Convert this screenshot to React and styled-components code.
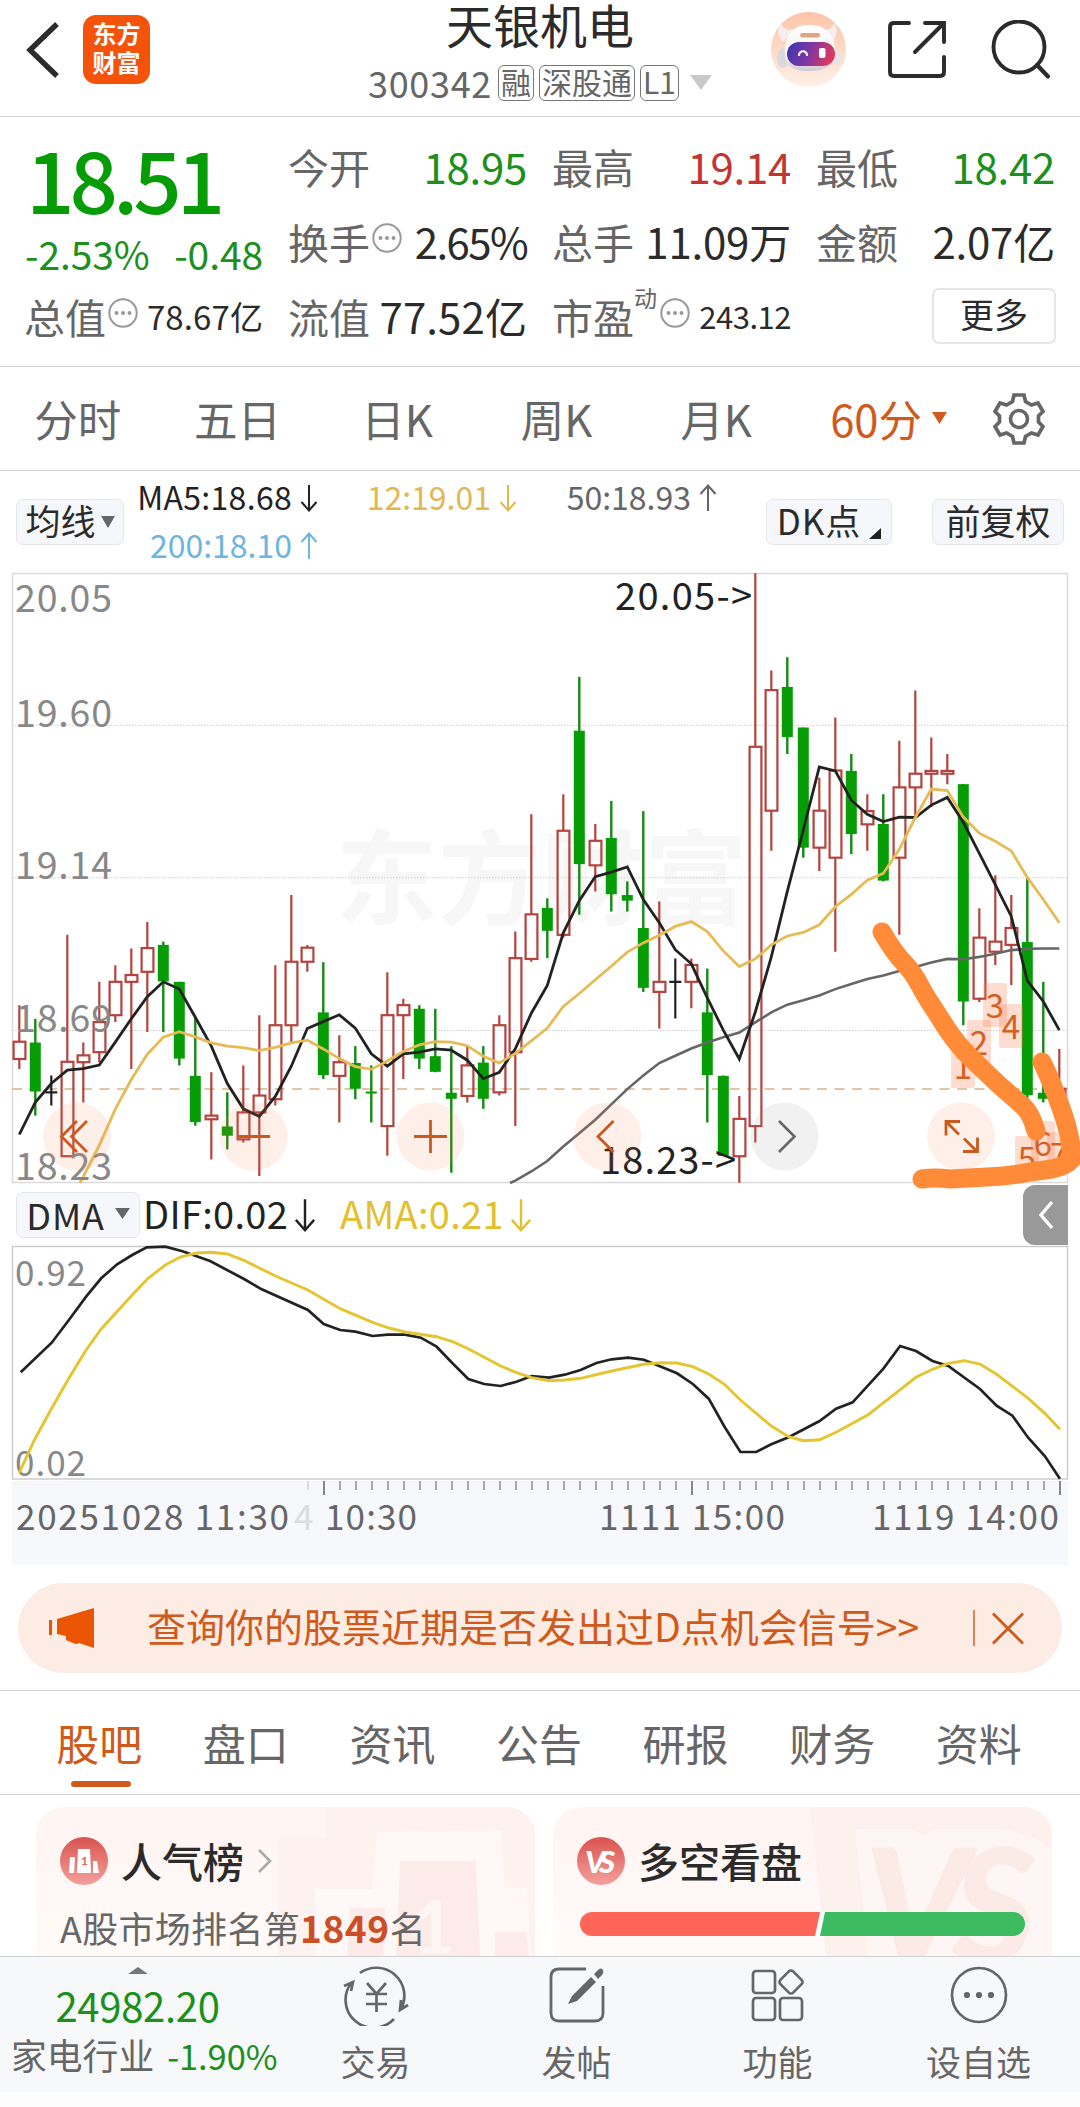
import styled, { createGlobalStyle } from "styled-components";

const green = "#1c8f1c";
const red = "#c23531";
const orange = "#d05a1b";
const gray = "#666";
const dark = "#2b2b2b";

const quotes = [
  { label: "今开", value: "18.95", color: green },
  { label: "最高", value: "19.14", color: red },
  { label: "最低", value: "18.42", color: green },
  { label: "换手", value: "2.65%", info: true, ls: -1.6 },
  { label: "总手", value: "11.09万", ls: -0.2 },
  { label: "金额", value: "2.07亿", ls: -0.2 },
  { label: "总值", value: "78.67亿", info: true, size: 33, ls: 0.1 },
  { label: "流值", value: "77.52亿", ls: 0.1 },
  { label: "市盈", sup: "动", value: "243.12", info: true, size: 31, ls: -0.5 },
];

const periods = ["分时", "五日", "日K", "周K", "月K"];
const tabs = ["股吧", "盘口", "资讯", "公告", "研报", "财务", "资料"];

// [kind, high, body top, body bottom, low] in chart steps
const candles = [
  ["r", 1083, 1174, 1217, 1242],
  ["g", 1117, 1176, 1298, 1358],
  ["k", 1258, 1300, 1300, 1333],
  ["r", 908, 1224, 1459, 1459],
  ["r", 1176, 1208, 1225, 1325],
  ["r", 1025, 1125, 1200, 1225],
  ["r", 984, 1025, 1108, 1125],
  ["r", 942, 1008, 1025, 1242],
  ["r", 876, 941, 1000, 1150],
  ["g", 925, 933, 1024, 1150],
  ["g", 1025, 1025, 1216, 1233],
  ["g", 1115, 1259, 1374, 1383],
  ["r", 1250, 1358, 1367, 1467],
  ["g", 1300, 1385, 1408, 1442],
  ["r", 1233, 1350, 1417, 1425],
  ["r", 1108, 1308, 1350, 1508],
  ["r", 984, 1133, 1317, 1333],
  ["r", 809, 975, 1133, 1175],
  ["r", 933, 940, 975, 1000],
  ["g", 976, 1101, 1257, 1267],
  ["r", 1158, 1225, 1259, 1375],
  ["g", 1185, 1227, 1291, 1317],
  ["g", 1233, 1298, 1303, 1375],
  ["r", 1001, 1108, 1384, 1458],
  ["r", 1067, 1083, 1108, 1267],
  ["g", 1083, 1092, 1216, 1242],
  ["g", 1092, 1210, 1249, 1250],
  ["g", 1185, 1301, 1316, 1500],
  ["r", 1183, 1233, 1309, 1325],
  ["g", 1185, 1226, 1316, 1341],
  ["r", 1108, 1133, 1300, 1308],
  ["r", 900, 966, 1200, 1384],
  ["r", 608, 857, 968, 975],
  ["g", 817, 841, 898, 966],
  ["r", 558, 649, 908, 915],
  ["g", 266, 400, 732, 858],
  ["r", 632, 674, 735, 800],
  ["g", 575, 667, 807, 850],
  ["g", 775, 809, 823, 850],
  ["g", 600, 891, 1040, 1050],
  ["r", 825, 1025, 1050, 1141],
  ["k", 967, 1025, 1025, 1116],
  ["r", 967, 983, 1025, 1091],
  ["g", 992, 1101, 1257, 1375],
  ["g", 1258, 1259, 1458, 1458],
  ["r", 1309, 1366, 1459, 1525],
  ["r", 8, 440, 1384, 1425],
  ["r", 250, 299, 599, 699],
  ["g", 217, 291, 416, 458],
  ["g", 392, 392, 691, 716],
  ["r", 517, 599, 691, 749],
  ["r", 367, 499, 716, 950],
  ["g", 458, 500, 657, 707],
  ["r", 558, 600, 633, 699],
  ["g", 558, 632, 773, 775],
  ["r", 425, 541, 716, 908],
  ["r", 300, 507, 541, 616],
  ["r", 417, 500, 507, 590],
  ["r", 458, 500, 507, 533],
  ["g", 533, 533, 1074, 1133],
  ["r", 842, 915, 1067, 1075],
  ["r", 760, 925, 950, 983],
  ["r", 809, 891, 933, 1033],
  ["g", 767, 926, 1307, 1333],
  ["g", 1025, 1301, 1316, 1325],
  ["r", 1192, 1291, 1325, 1340],
];

const ma5 = [
  1405, 1325, 1278, 1245, 1241, 1232, 1175, 1117, 1062, 1025, 1043, 1113, 1185,
  1278, 1341, 1360, 1310, 1235, 1141, 1124, 1107, 1140, 1204, 1235, 1204, 1200,
  1192, 1195, 1220, 1266, 1250, 1192, 1103, 1034, 903, 823, 763, 752, 739, 820,
  878, 945, 980, 1065, 1145, 1217, 1100, 963, 800, 647, 490, 500, 573, 608, 626,
  615, 616, 585, 566, 628, 705, 783, 862, 1022, 1074, 1145,
];
// starts at the sixth candle
const ma12 = [
  1432, 1342, 1268, 1205, 1163, 1149, 1162, 1177, 1185, 1189, 1196, 1188, 1177,
  1170, 1192, 1216, 1236, 1243, 1222, 1198, 1182, 1174, 1175, 1184, 1210, 1227,
  1203, 1172, 1140, 1086, 1054, 1020, 986, 951, 928, 909, 887, 875, 900, 948,
  987, 968, 933, 911, 902, 883, 838, 807, 772, 755, 695, 616, 545, 549, 615,
  655, 675, 699, 765, 820, 878,
];
const ma50 = [
  1520, 1497, 1471, 1435, 1402, 1368, 1330, 1292, 1258, 1227, 1209, 1191, 1176,
  1163, 1151, 1126, 1101, 1082, 1071, 1059, 1043, 1030, 1018, 1009, 998, 988,
  977, 968, 969, 963, 955, 946, 943, 942, 942,
];

const dif = [
  [30, 577], [75, 488], [100, 420], [125, 350], [147, 295], [170, 253],
  [192, 225], [213, 202], [240, 200], [265, 214], [305, 243], [355, 298],
  [380, 328], [447, 390], [470, 432], [494, 450], [516, 455], [541, 468],
  [563, 464], [588, 464], [611, 473], [634, 500], [657, 550], [680, 597],
  [703, 612], [727, 618], [750, 605], [772, 588], [797, 593], [820, 584],
  [843, 570], [866, 549], [888, 538], [912, 533], [935, 539], [983, 580],
  [1006, 612], [1029, 656], [1052, 740], [1075, 816], [1098, 816], [1120, 793],
  [1145, 772], [1190, 723], [1214, 686], [1238, 667], [1283, 565], [1307, 498],
  [1330, 513], [1354, 543], [1377, 558], [1423, 627], [1447, 677], [1470, 707],
  [1493, 773], [1517, 828], [1539, 896],
];
const ama = [
  [28, 878], [50, 780], [75, 685], [100, 595], [125, 510], [147, 447],
  [192, 345], [215, 295], [240, 255], [262, 231], [285, 219], [306, 217],
  [330, 222], [355, 242], [400, 288], [447, 330], [494, 386], [541, 427],
  [565, 444], [588, 456], [634, 470], [657, 485], [680, 506], [703, 532],
  [727, 558], [750, 578], [772, 593], [797, 602], [820, 600], [843, 595],
  [888, 573], [935, 553], [960, 548], [983, 549], [1006, 560], [1029, 582],
  [1052, 613], [1075, 660], [1120, 738], [1145, 770], [1167, 782], [1190, 779],
  [1214, 757], [1260, 705], [1283, 668], [1330, 592], [1354, 568], [1377, 550],
  [1400, 542], [1423, 552], [1447, 583], [1493, 655], [1517, 700], [1539, 748],
];

const cx = (i) => 19.3 + i * 16;
const cy = (v) => 570 + v * 0.4018;
const line = (values, start) =>
  values.map((v, i) => `${cx(i + start)},${cy(v).toFixed(1)}`).join(" ");
const dmaLine = (points) =>
  points
    .map(([x, y]) => `${(x / 1.452).toFixed(1)},${(1180 + y / 3).toFixed(1)}`)
    .join(" ");

const scale = [
  ["20.05", 612],
  ["19.60", 727],
  ["19.14", 879],
  ["18.69", 1032],
  ["18.23", 1180],
];

const marks = [
  ["1", 951, 1044],
  ["2", 967, 1020],
  ["3", 983, 983],
  ["4", 999, 1004],
  ["5", 1015, 1136],
  ["6", 1031, 1121],
  ["7", 1047, 1132],
];

function Candle({ index, data }) {
  const [kind, high, top, bottom, low] = data;
  const x = cx(index);
  if (kind === "k") {
    return (
      <path
        d={`M${x} ${cy(high)}V${cy(low)}M${x - 6} ${cy(top)}h12`}
        stroke="#222"
        strokeWidth="2.2"
      />
    );
  }
  if (kind === "g") {
    return (
      <g>
        <path
          d={`M${x} ${cy(high)}V${cy(low)}`}
          stroke="#148a14"
          strokeWidth="2.4"
        />
        <rect
          x={x - 5.5}
          y={cy(top)}
          width="11"
          height={cy(bottom) - cy(top)}
          fill="#069c06"
        />
      </g>
    );
  }
  return (
    <g stroke="#b5423e" strokeWidth="2.2" fill="none">
      <path
        d={`M${x} ${cy(high)}V${cy(top)}M${x} ${cy(bottom)}V${cy(low)}`}
      />
      <rect
        x={x - 5.7}
        y={cy(top)}
        width="11.8"
        height={cy(bottom) - cy(top)}
      />
    </g>
  );
}

function Arrow({ up, tall }) {
  return (
    <svg width={tall ? 22 : 18} height={tall ? 34 : 28} viewBox="0 0 18 28">
      <path
        d={up ? "M9 27V2M1.5 10L9 1.5 16.5 10" : "M9 1v25M1.5 18L9 26.5 16.5 18"}
        fill="none"
        stroke="currentColor"
        strokeWidth="2"
      />
    </svg>
  );
}

function Triangle({ width, height, up }) {
  return (
    <svg width={width} height={height} viewBox="0 0 10 10" preserveAspectRatio="none">
      <path d={up ? "M0 10h10L5 0z" : "M0 0h10L5 10z"} fill="currentColor" />
    </svg>
  );
}

function InfoIcon() {
  return (
    <Info viewBox="0 0 30 30">
      <circle cx="15" cy="15" r="13.7" fill="none" stroke="#999" strokeWidth="2" />
      <circle cx="8.5" cy="15" r="2" fill="#999" />
      <circle cx="15" cy="15" r="2" fill="#999" />
      <circle cx="21.5" cy="15" r="2" fill="#999" />
    </Info>
  );
}

function Robot() {
  return (
    <svg width="75" height="75" viewBox="0 0 75 75">
      <defs>
        <linearGradient id="robotBg" x1="0" y1="0" x2="0" y2="1">
          <stop offset="0" stopColor="#fdc4a6" />
          <stop offset="1" stopColor="#fff0e8" />
        </linearGradient>
        <linearGradient id="robotFace" x1="0" y1="0" x2="1" y2="0.2">
          <stop offset="0" stopColor="#3a35b0" />
          <stop offset="0.5" stopColor="#7a35a8" />
          <stop offset="1" stopColor="#d83a5e" />
        </linearGradient>
        <linearGradient id="robotHead" x1="0" y1="0" x2="0" y2="1">
          <stop offset="0" stopColor="#fff" />
          <stop offset="0.7" stopColor="#f3eff2" />
          <stop offset="1" stopColor="#cfc9d2" />
        </linearGradient>
      </defs>
      <circle cx="37.5" cy="37.5" r="37.5" fill="url(#robotBg)" />
      <path d="M12 30C5 22 7 15 10 11c1 5 6 8 13 6zM61 30c7-8 5-15 2-19-1 5-6 8-13 6z" fill="#f6eeee" />
      <ellipse cx="12" cy="46" rx="6" ry="10" fill="#ddd8de" />
      <ellipse cx="65" cy="45" rx="5" ry="8" fill="#e9e2e6" />
      <path d="M38 13c17 0 26 10 26 25 1 16-9 21-26 21S13 54 14 38c0-15 8-25 24-25z" fill="url(#robotHead)" />
      <rect x="29" y="21" width="20" height="4.5" rx="2.2" fill="#dca77f" />
      <rect x="16" y="30" width="48" height="24" rx="12" fill="url(#robotFace)" />
      <path d="M28 43c1-5 7-5 8 0" fill="none" stroke="#fff" strokeWidth="2.2" strokeLinecap="round" />
      <rect x="48" y="36" width="6.5" height="10" rx="2" fill="#fff" />
    </svg>
  );
}

function KChart() {
  return (
    <ChartSvg height="613" viewBox="0 572 1080 613">
      <rect x="12.5" y="573.5" width="1055" height="609" fill="none" stroke="#dcdcdc" strokeWidth="1.6" />
      <Watermark x="335" y="917" textLength="412">
        东方财富
      </Watermark>
      {[725.3, 877.8, 1030.5].map((y) => (
        <path key={y} d={`M12 ${y}H1068`} stroke="#cfcfcf" strokeWidth="1" strokeDasharray="1.5 1.5" />
      ))}
      <path d="M12 1089H1068" stroke="#d3b48a" strokeWidth="1.4" strokeDasharray="10 7.5" />
      {candles.map((data, i) => (
        <Candle key={i} index={i} data={data} />
      ))}
      <polyline points={`510,1183 ${line(ma50, 31)}`} fill="none" stroke="#666" strokeWidth="2.6" />
      <polyline points={line(ma5, 0)} fill="none" stroke="#222" strokeWidth="2.8" />
      <polyline points={`80,1183 ${line(ma12, 5)}`} fill="none" stroke="#e6bb55" strokeWidth="2.8" />
      {scale.map(([text, y]) => (
        <ScaleText key={text} x="15" y={y} textLength="97">
          {text}
        </ScaleText>
      ))}
      <NoteText x="615" y="610" textLength="137">
        20.05-&gt;
      </NoteText>
      <NoteText x="600" y="1174" textLength="136">
        18.23-&gt;
      </NoteText>
      {[77, 253.7, 430.5, 607.5, 961].map((x) => (
        <circle key={x} cx={x} cy="1136.5" r="34" fill="#f9814a" fillOpacity="0.13" />
      ))}
      <circle cx="784.7" cy="1136.5" r="34" fill="#888" fillOpacity="0.12" />
      <g fill="none" stroke="#c9591c" strokeWidth="2.8">
        <path d="M77 1121L61.5 1136.5 77 1152M87 1121L71.5 1136.5 87 1152" />
        <path d="M237 1136.5h33M414 1136.5h33M430.5 1120v33" />
        <path d="M613.5 1121L598 1136.5l15.5 15.5" />
        <path d="M960 1121.5h-14v14M946 1121.5l13 13M963 1151.5h14.5v-14M977 1151.5l-13-13" />
      </g>
      <path d="M779 1121l15.5 15.5L779 1152" fill="none" stroke="#666" strokeWidth="2.6" />
      {marks.map(([text, x, y]) => (
        <g key={text}>
          <rect x={x} y={y} width={text === "7" ? 19 : 24} height="44" rx="2" fill="#fb7d4f" fillOpacity="0.27" />
          <MarkText x={x + 12} y={y + 35}>
            {text}
          </MarkText>
        </g>
      ))}
      <g fill="none" stroke="#ff8b38" strokeWidth="19" strokeLinecap="round" strokeLinejoin="round">
        <path d="M882 932C889 944 895 954 905 964C917 976 920 988 929 1001L947 1029Q959 1047 973 1060L997 1083 1023 1106Q1031 1113 1036 1131" />
        <path d="M1042 1062C1050 1078 1056 1094 1061 1108C1068 1128 1071 1140 1072 1159Q1066 1166 1052 1169L1030 1172Q1010 1176 987 1177L950 1179Q935 1177 922 1179" />
      </g>
    </ChartSvg>
  );
}

function DmaChart() {
  const ticks = Array.from({ length: 48 }, (_, i) => i);
  return (
    <ChartSvg height="320" viewBox="0 1245 1080 320">
      <rect x="12" y="1481" width="1056" height="84" fill="#f7f8fb" />
      <rect x="12.5" y="1246.5" width="1055" height="232.5" fill="#fff" stroke="#c9c9c9" strokeWidth="1.4" />
      <DmaText x="15" y="1286" textLength="71">
        0.92
      </DmaText>
      <DmaText x="15" y="1476" textLength="71">
        0.02
      </DmaText>
      <polyline points={dmaLine(dif)} fill="none" stroke="#222" strokeWidth="2.7" />
      <polyline points={dmaLine(ama)} fill="none" stroke="#e5c52f" strokeWidth="2.9" />
      {ticks.map((i) => {
        const major = i === 1 || i === 24 || i === 47;
        return (
          <path
            key={i}
            d={`M${308 + i * 16} 1481v${major ? 14 : 9}`}
            stroke={i === 0 ? "#ccc" : "#888"}
            strokeWidth={major ? 2 : 1.4}
          />
        );
      })}
      <AxisText x="16" y="1530" textLength="273">
        20251028 11:30
      </AxisText>
      <AxisText x="294" y="1530" $faint>
        4
      </AxisText>
      <AxisText x="325" y="1530" textLength="92">
        10:30
      </AxisText>
      <AxisText x="599" y="1530" textLength="186">
        1111 15:00
      </AxisText>
      <AxisText x="872" y="1530" textLength="187">
        1119 14:00
      </AxisText>
    </ChartSvg>
  );
}

export default function App() {
  return (
    <Page>
      <GlobalStyle />
      <Header>
        <HeaderLeft>
          <svg width="34" height="56" viewBox="0 0 34 56">
            <path d="M32 2L5 28l27 26" fill="none" stroke="#2b2b2b" strokeWidth="5.4" />
          </svg>
          <Logo>
            <span>东方</span>
            <span>财富</span>
          </Logo>
        </HeaderLeft>
        <Title>
          <h1>天银机电</h1>
          <Code>
            <span>300342</span>
            <Tag>融</Tag>
            <Tag>深股通</Tag>
            <Tag>L1</Tag>
            <CodeArrow>
              <Triangle width={22} height={15} />
            </CodeArrow>
          </Code>
        </Title>
        <HeaderRight>
          <Robot />
          <svg width="58" height="58" viewBox="0 0 58 58">
            <path
              d="M21 2H6Q2 2 2 6V51Q2 55 6 55H52Q56 55 56 51V36M37 2H56V21M55 3L27 31"
              fill="none"
              stroke="#2b2b2b"
              strokeWidth="3.9"
              strokeLinecap="round"
            />
          </svg>
          <svg width="60" height="60" viewBox="0 0 60 60">
            <circle cx="28" cy="27" r="25.5" fill="none" stroke="#2b2b2b" strokeWidth="3.9" />
            <path d="M46 45L57 56.5" stroke="#2b2b2b" strokeWidth="4.2" strokeLinecap="round" />
          </svg>
        </HeaderRight>
      </Header>

      <Quote>
        <Price>
          <strong>18.51</strong>
          <div>
            <span>-2.53%</span>
            <span>-0.48</span>
          </div>
        </Price>
        {quotes.map((item) => (
          <Cell key={item.label}>
            <Label>
              {item.label}
              {item.sup && <sup>{item.sup}</sup>}
              {item.info && <InfoIcon />}
            </Label>
            <Value $color={item.color} $size={item.size} $ls={item.ls}>
              {item.value}
            </Value>
          </Cell>
        ))}
        <More>更多</More>
      </Quote>

      <Periods>
        {periods.map((text) => (
          <Period key={text}>{text}</Period>
        ))}
        <Period $active>
          60分
          <Triangle width={15} height={12} />
        </Period>
        <svg width="52" height="52" viewBox="0 0 52 52">
          <path
            d="M21 2h10l1.5 6.5 6 3.5 6.5-2 5 8.5-4.5 4.5v6l4.5 4.5-5 8.5-6.500-2-6 3.5L31 50H21l-1.5-6.5-6-3.5-6.5 2-5-8.5L6.5 29v-6L2 18.5 7 10l6.5 2 6-3.5z"
            fill="none"
            stroke="#666"
            strokeWidth="3.7"
          />
          <circle cx="26" cy="26" r="8.5" fill="none" stroke="#666" strokeWidth="3.6" />
        </svg>
      </Periods>

      <Indicators>
        <Chip $width={108}>
          均线
          <ChipArrow>
            <Triangle width={14} height={12} />
          </ChipArrow>
        </Chip>
        <Legend>
          <LegendItem $color="#222" $ls={0.3}>
            MA5:18.68
            <Arrow />
          </LegendItem>
          <LegendItem $color="#e3b752">
            12:19.01
            <Arrow />
          </LegendItem>
          <LegendItem $color="#666">
            50:18.93
            <Arrow up />
          </LegendItem>
          <LegendItem $color="#6db4de">
            200:18.10
            <Arrow up />
          </LegendItem>
        </Legend>
        <DkChip $width={126}>
          DK点
          <svg width="12" height="11" viewBox="0 0 12 11">
            <path d="M12 0v11H0z" fill="#222" />
          </svg>
        </DkChip>
        <Chip $width={132}>前复权</Chip>
      </Indicators>

      <KChart />

      <DmaBar>
        <DmaChip $width={124}>
          DMA
          <Triangle width={15} height={11} />
        </DmaChip>
        <DmaItem $color="#222" $width={194}>
          DIF:0.02
          <Arrow tall />
        </DmaItem>
        <DmaItem $color="#e3bf2e">
          AMA:0.21
          <Arrow tall />
        </DmaItem>
        <Handle>
          <svg width="16" height="30" viewBox="0 0 16 30">
            <path d="M14 2L3 15l11 13" fill="none" stroke="#fff" strokeWidth="3.4" />
          </svg>
        </Handle>
      </DmaBar>

      <DmaChart />

      <Banner>
        <svg width="46" height="40" viewBox="0 0 46 40">
          <path d="M1 12h3v15H1zM9 11L46 0v40l-15-5q-2 2-6 0l-7-3v-4l-9-2z" fill="#ea5504" />
        </svg>
        <p>查询你的股票近期是否发出过D点机会信号&gt;&gt;</p>
        <i />
        <svg width="34" height="33" viewBox="0 0 34 33">
          <path d="M2 1.5l30 30M32 1.5l-30 30" stroke={orange} strokeWidth="2.8" />
        </svg>
      </Banner>

      <Tabs>
        {tabs.map((text, i) => (
          <Tab key={text} $active={i === 0}>
            {text}
          </Tab>
        ))}
      </Tabs>

      <Cards>
        <Card>
          <Decor viewBox="36 1807 499 149">
            <path d="M326 1807H535V1956H278V1838H325z" fill="#fdf2ef" />
            <path d="M377 1832L501 1830 505 1888H527L531 1956H315V1889H372z" fill="#fff8f6" />
            <path d="M400 1861h76l4 95h-84zM350 1908h35l-2 48h-36zM495 1932h31l3 24h-34z" fill="#fcebe8" />
            <DecorOne x="412" y="1954">
              1
            </DecorOne>
          </Decor>
          <CardTitle>
            <svg width="48" height="48" viewBox="0 0 48 48">
              <defs>
                <linearGradient id="badge" x1="0" y1="0" x2="0" y2="1">
                  <stop offset="0" stopColor="#d9534f" />
                  <stop offset="1" stopColor="#f3a09b" />
                </linearGradient>
              </defs>
              <circle cx="24" cy="24" r="24" fill="url(#badge)" />
              <path d="M10 20h5l-1 16H9zM18 12h12l1 24H17zM33 24h4l2 12h-6z" fill="#fff" />
              <BadgeOne x="21" y="28">
                1
              </BadgeOne>
            </svg>
            <span>人气榜</span>
            <svg width="15" height="24" viewBox="0 0 15 24">
              <path d="M2 1l11 11L2 23" fill="none" stroke="#aaa" strokeWidth="2.6" />
            </svg>
          </CardTitle>
          <Rank>
            A股市场排名第<b>1849</b>名
          </Rank>
        </Card>
        <Card>
          <Decor viewBox="553 1807 499 149">
            <path d="M810 1807H1052V1956H826z" fill="#fdf1ee" />
            <path d="M855 1829H910L925 1836 935 1829H1000Q1030 1832 1052 1850V1956H868z" fill="#fef6f4" />
            <DecorVs x="864" y="1964">
              VS
            </DecorVs>
          </Decor>
          <CardTitle>
            <svg width="48" height="48" viewBox="0 0 48 48">
              <circle cx="24" cy="24" r="24" fill="url(#badge)" />
              <BadgeVs x="8" y="36" textLength="30">
                VS
              </BadgeVs>
            </svg>
            <span>多空看盘</span>
          </CardTitle>
          <Ratio>
            <Bull />
            <Bear />
          </Ratio>
        </Card>
      </Cards>

      <BottomBar>
        <IndexBox>
          <Triangle width={20} height={7} up />
          <strong>24982.20</strong>
          <p>
            家电行业<span>-1.90%</span>
          </p>
        </IndexBox>
        <Action>
          <svg width="66" height="60" viewBox="0 0 66 60" fill="none" stroke="#666" strokeWidth="2.7">
            <path d="M17 7A28 28 0 0 1 58 43M65 39l-8 5 1-10M51 53A28 28 0 0 1 9 16M1 20l9-4-2 9" />
            <path d="M24 17l9.5 11 9.5-11M23 28h21M23 38h21M33.5 28v18" />
          </svg>
          交易
        </Action>
        <Action>
          <svg width="56" height="60" viewBox="0 0 56 60">
            <path
              d="M37 3H10Q2 3 2 11V47Q2 55 10 55H46Q54 55 54 47V20"
              fill="none"
              stroke="#666"
              strokeWidth="2.8"
            />
            <path d="M19 38l4-8 19-19 5 5-19 19zM45 8l4-4q3-3 5 0 1 3-1 5l-4 4z" fill="#666" />
          </svg>
          发帖
        </Action>
        <Action>
          <svg width="54" height="60" viewBox="0 0 54 60" fill="none" stroke="#666" strokeWidth="2.7">
            <rect x="2" y="5" width="22" height="22" rx="3" />
            <rect x="2" y="32" width="22" height="22" rx="3" />
            <rect x="29" y="32" width="22" height="22" rx="3" />
            <rect x="31" y="7" width="18" height="18" rx="3" transform="rotate(45 40 16)" />
          </svg>
          功能
        </Action>
        <Action>
          <svg width="58" height="60" viewBox="0 0 58 60">
            <circle cx="29" cy="29" r="27" fill="none" stroke="#666" strokeWidth="2.7" />
            <circle cx="17" cy="29" r="3.1" fill="#666" />
            <circle cx="29" cy="29" r="3.1" fill="#666" />
            <circle cx="41" cy="29" r="3.1" fill="#666" />
          </svg>
          设自选
        </Action>
      </BottomBar>
    </Page>
  );
}

const GlobalStyle = createGlobalStyle`
  * {
    box-sizing: border-box;
  }
  body {
    margin: 0;
    background: #fcfcfc;
    font-family: "Noto Sans CJK SC", sans-serif;
    color: ${dark};
  }
  h1, p {
    margin: 0;
  }
  svg {
    display: block;
    flex: none;
  }
`;

const Page = styled.div`
  width: 1080px;
  height: 2092px;
  overflow: hidden;
  display: flex;
  flex-direction: column;
  background: #fff;
  > * {
    flex: none;
  }
`;

const Header = styled.header`
  height: 117px;
  display: grid;
  grid-template-columns: 1fr auto 1fr;
  border-bottom: 1px solid #d2d2d2;
`;

const HeaderLeft = styled.div`
  display: flex;
  align-items: center;
  height: 99px;
  padding-left: 25px;
  gap: 24px;
`;

const Logo = styled.div`
  width: 67px;
  height: 69px;
  border-radius: 13px;
  background: #f6530a;
  color: #fff;
  font-size: 24px;
  font-weight: 700;
  line-height: 29px;
  padding-top: 3px;
  display: flex;
  flex-direction: column;
  align-items: center;
`;

const Title = styled.div`
  display: flex;
  flex-direction: column;
  align-items: center;
  h1 {
    font-size: 47px;
    font-weight: 400;
    line-height: 48px;
    height: 56px;
  }
`;

const Code = styled.div`
  display: flex;
  align-items: center;
  height: 53px;
  gap: 5px;
  font-size: 36px;
  color: ${gray};
  line-height: 36px;
  span {
    margin: 0 1px 2px 0;
    letter-spacing: 0.7px;
  }
`;

const Tag = styled.div`
  height: 36px;
  padding: 0 2px;
  border: 1.5px solid #777;
  border-radius: 6px;
  font-size: 30px;
  line-height: 31px;
`;

const CodeArrow = styled.div`
  color: #c8c8c8;
  margin-left: 6px;
`;

const HeaderRight = styled.div`
  display: flex;
  align-items: center;
  justify-content: flex-end;
  height: 99px;
  padding-right: 29px;
  gap: 42px;
  svg:last-child {
    margin-left: 3px;
  }
`;

const Quote = styled.section`
  height: 250px;
  padding: 11px 25px 0;
  border-bottom: 1px solid #d2d2d2;
  display: grid;
  grid-template-columns: repeat(4, 238px);
  grid-template-rows: repeat(3, 75px);
  column-gap: 26px;
`;

const Price = styled.div`
  grid-row: span 2;
  color: ${green};
  strong {
    display: block;
    margin-left: 1px;
    font-size: 85px;
    font-weight: 500;
    line-height: 98px;
    letter-spacing: -5px;
    color: #069c06;
  }
  div {
    display: flex;
    justify-content: space-between;
    font-size: 39px;
    line-height: 54px;
    letter-spacing: -0.1px;
  }
`;

const Cell = styled.div`
  display: flex;
  align-items: center;
  justify-content: space-between;
  white-space: nowrap;
`;

const Label = styled.div`
  display: flex;
  align-items: center;
  margin-left: -1px;
  font-size: 41px;
  color: ${gray};
  sup {
    align-self: flex-start;
    font-size: 23px;
    line-height: 23px;
    margin-right: 1px;
  }
`;

const Info = styled.svg`
  width: 30px;
  height: 30px;
  margin: -5px 0 0 2px;
`;

const Value = styled.div`
  font-size: ${(props) => props.$size || 42}px;
  letter-spacing: ${(props) => props.$ls || -0.3}px;
  color: ${(props) => props.$color || dark};
`;

const More = styled.button`
  justify-self: end;
  align-self: center;
  width: 124px;
  height: 56px;
  margin-right: -1px;
  padding: 0 0 5px;
  border: 2px solid #e6e6e6;
  border-radius: 7px;
  background: #fff;
  font: 34px "Noto Sans CJK SC", sans-serif;
  line-height: 48px;
  color: ${dark};
`;

const Periods = styled.nav`
  height: 104px;
  display: flex;
  align-items: center;
  border-bottom: 1px solid #d2d2d2;
`;

const Period = styled.div`
  width: 159.6px;
  padding: 0 4px 1px 0;
  display: flex;
  align-items: center;
  justify-content: center;
  gap: 10px;
  font-size: 43.5px;
  color: ${(props) => (props.$active ? orange : gray)};
  &:nth-child(6) {
    width: 149px;
    padding-right: 0;
    justify-content: flex-end;
    margin-right: 46px;
  }
`;

const Indicators = styled.div`
  height: 101px;
  padding: 0 16px;
  display: flex;
  align-items: center;
`;

const Chip = styled.button`
  width: ${(props) => props.$width}px;
  height: 46px;
  margin: 0;
  padding: 0 0 3px;
  display: flex;
  align-items: center;
  justify-content: center;
  gap: 5px;
  white-space: nowrap;
  border: 1.5px solid #e4e6ea;
  border-radius: 7px;
  background: #f6f7fa;
  color: ${dark};
  font: 35px "Noto Sans CJK SC", sans-serif;
  line-height: 42px;
  svg {
    color: ${gray};
  }
`;

const ChipArrow = styled.span`
  padding-top: 4px;
`;

const DkChip = styled(Chip)`
  margin: 0 40px 0 auto;
  gap: 8px;
  letter-spacing: 0.9px;
  svg {
    margin-top: 27px;
  }
`;

const DmaChip = styled(Chip)`
  gap: 10px;
  font-size: 36px;
  letter-spacing: 0.8px;
`;

const Legend = styled.div`
  display: grid;
  grid-template-columns: 193px 199px 200px;
  grid-auto-rows: 48px;
  margin: -3px 0 0 1px;
`;

const LegendItem = styled.div`
  display: flex;
  align-items: center;
  justify-content: flex-end;
  gap: 8px;
  font-size: 32px;
  letter-spacing: ${(props) => props.$ls || 0}px;
  line-height: 40px;
  white-space: nowrap;
  color: ${(props) => props.$color};
  svg {
    margin-top: 4px;
  }
`;

const ChartSvg = styled.svg`
  width: 1080px;
  overflow: visible;
  font-family: "Noto Sans CJK SC", sans-serif;
  position: relative;
  z-index: 1;
`;

const Watermark = styled.text`
  font-size: 103px;
  font-weight: 700;
  fill: #f7f7f7;
`;

const ScaleText = styled.text`
  font-size: 37.5px;
  fill: #888;
`;

const NoteText = styled.text`
  font-size: 38px;
  fill: #222;
`;

const MarkText = styled.text`
  font-size: 33px;
  fill: #d4601f;
  text-anchor: middle;
`;

const DmaText = styled.text`
  font-size: 35px;
  fill: #888;
`;

const AxisText = styled.text`
  font-size: 35px;
  fill: ${(props) => (props.$faint ? "#ddd" : gray)};
`;

const DmaBar = styled.div`
  height: 60px;
  padding: 0 12px 0 16px;
  display: flex;
  align-items: center;
`;

const DmaItem = styled.div`
  width: ${(props) => props.$width}px;
  margin-left: 3px;
  display: flex;
  align-items: center;
  gap: 6px;
  font-size: 38px;
  line-height: 48px;
  letter-spacing: 0.3px;
  padding-bottom: 5px;
  white-space: nowrap;
  color: ${(props) => props.$color};
  svg {
    margin-top: 4px;
  }
`;

const Handle = styled.div`
  width: 45px;
  height: 60px;
  margin-left: auto;
  border-radius: 12px 0 0 12px;
  background: #999;
  display: flex;
  align-items: center;
  justify-content: center;
`;

const Banner = styled.div`
  height: 90px;
  margin: 18px 18px 0;
  padding: 0 37px 0 30px;
  border-radius: 45px;
  background: #fcece4;
  display: flex;
  align-items: center;
  p {
    flex: 1;
    margin-left: 53px;
    padding-bottom: 6px;
    font-size: 39px;
    line-height: 50px;
    color: ${orange};
    white-space: nowrap;
  }
  i {
    width: 2px;
    height: 36px;
    margin-right: 16px;
    background: #dc8256;
  }
`;

const Tabs = styled.nav`
  height: 105px;
  margin-top: 17px;
  padding: 0 28px 0 26px;
  display: flex;
  border: solid #d2d2d2;
  border-width: 1px 0;
`;

const Tab = styled.div`
  position: relative;
  flex: 1;
  text-align: center;
  font-size: 43px;
  line-height: 103px;
  color: ${(props) => (props.$active ? orange : gray)};
  &::after {
    content: "";
    display: ${(props) => (props.$active ? "block" : "none")};
    position: absolute;
    left: 45px;
    bottom: 7px;
    width: 60px;
    height: 6px;
    border-radius: 3px;
    background: ${orange};
  }
`;

const Cards = styled.div`
  height: 161px;
  padding: 12px 28px 0 36px;
  display: flex;
  gap: 18px;
`;

const Card = styled.div`
  position: relative;
  width: 499px;
  height: 149px;
  padding: 29px 24px 0;
  border-radius: 28px 28px 0 0;
  overflow: hidden;
  background: linear-gradient(#fff5f3, #fffaf8);
`;

const Decor = styled.svg`
  position: absolute;
  top: 0;
  left: 0;
  width: 499px;
  height: 149px;
`;

const DecorOne = styled.text`
  font: 700 74px Lato, sans-serif;
  fill: #fff5f3;
`;

const DecorVs = styled.text`
  font: italic 900 160px Lato, sans-serif;
  fill: #fceae7;
  letter-spacing: -14px;
`;

const BadgeOne = styled.text`
  font: 700 12px Lato, sans-serif;
  fill: #dd6662;
`;

const BadgeVs = styled.text`
  font: italic 900 31px Lato, sans-serif;
  fill: #fff;
`;

const CardTitle = styled.div`
  position: relative;
  display: flex;
  align-items: center;
  height: 50px;
  gap: 13px;
  font-size: 41px;
  font-weight: 500;
  line-height: 46px;
  span {
    padding-bottom: 3px;
  }
`;

const Rank = styled.p`
  position: relative;
  margin-top: 15px;
  font-size: 36px;
  line-height: 52px;
  letter-spacing: 0.3px;
  color: ${gray};
  white-space: nowrap;
  b {
    color: #cc4e24;
    font-size: 37px;
    letter-spacing: 0.6px;
  }
`;

const Ratio = styled.div`
  position: relative;
  height: 24px;
  width: 445px;
  margin: 26px 0 0 3px;
  display: flex;
  border-radius: 12px;
  overflow: hidden;
  background: #fff;
`;

const Bull = styled.div`
  width: 240px;
  background: #ff6459;
  clip-path: polygon(0 0, 100% 0, calc(100% - 5px) 100%, 0 100%);
`;

const Bear = styled.div`
  flex: 1;
  background: #3dbb60;
  clip-path: polygon(5px 0, 100% 0, 100% 100%, 0 100%);
`;

const BottomBar = styled.footer`
  height: 136px;
  display: flex;
  background: #f7f8fa;
  border-top: 1px solid #cfd2d5;
`;

const IndexBox = styled.div`
  width: 275px;
  padding-top: 10px;
  display: flex;
  flex-direction: column;
  align-items: center;
  color: #777;
  strong {
    margin-top: 3px;
    font-size: 40px;
    font-weight: 400;
    line-height: 56px;
    letter-spacing: -0.3px;
    color: ${green};
  }
  p {
    align-self: flex-start;
    margin-left: 11px;
    font-size: 35.8px;
    line-height: 42px;
    white-space: nowrap;
    color: ${gray};
  }
  span {
    margin-left: 13px;
    font-size: 34.5px;
    letter-spacing: -0.1px;
    color: ${green};
  }
`;

const Action = styled.div`
  width: 201px;
  padding-top: 9px;
  display: flex;
  flex-direction: column;
  align-items: center;
  font-size: 35px;
  line-height: 52px;
  gap: 9px;
  color: ${gray};
`;
